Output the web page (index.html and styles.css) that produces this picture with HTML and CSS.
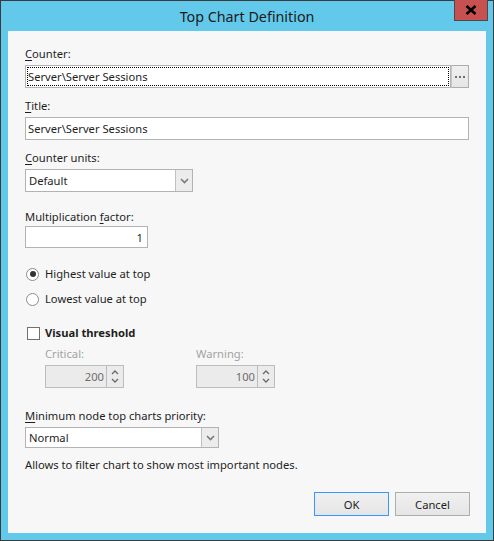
FILE: index.html
```html
<!DOCTYPE html>
<html>
<head>
<meta charset="utf-8">
<link rel="stylesheet" href="styles.css">
</head>
<body>
<div class="window">
  <div class="titlebar">
    <span class="title">Top Chart Definition</span>
    <div class="close"><svg width="12" height="10" viewBox="0 0 12 10"><path d="M1.5 1 L10.5 9 M10.5 1 L1.5 9" stroke="#000" stroke-width="2.6"/></svg></div>
  </div>
  <div class="client">
    <div class="label l-counter"><u>C</u>ounter:</div>
    <div class="row">
      <div class="textbox counter-box"><span>Server\Server Sessions</span></div>
      <div class="ellipsis"><i></i><i></i><i></i></div>
    </div>

    <div class="label l-gap10"><u>T</u>itle:</div>
    <div class="textbox full"><span>Server\Server Sessions</span></div>

    <div class="label l-gap10"><u>C</u>ounter units:</div>
    <div class="combo units">
      <span class="combo-text">Default</span>
      <span class="combo-btn"><svg width="9" height="6" viewBox="0 0 9 6"><path d="M1 1 L4.5 4.5 L8 1" fill="none" stroke="#7a7a7a" stroke-width="1.6"/></svg></span>
    </div>

    <div class="label l-mult">Multiplication <u>f</u>actor:</div>
    <div class="textbox mult"><span class="num">1</span></div>

    <div class="radio r1"><span class="rbox checked"></span><span>Highest value at top</span></div>
    <div class="radio r2"><span class="rbox"></span><span>Lowest value at top</span></div>

    <div class="check"><span class="cbox"></span><span class="bold">Visual threshold</span></div>

    <div class="thresholds">
      <div class="tcol">
        <div class="label dis">Critical:</div>
        <div class="spin">
          <span class="spin-val">200</span>
          <span class="spin-btns">
            <svg width="8" height="5" viewBox="0 0 8 5"><path d="M1 4 L4 1 L7 4" fill="none" stroke="#6a6a6a" stroke-width="1.3"/></svg>
            <svg width="8" height="5" viewBox="0 0 8 5"><path d="M1 1 L4 4 L7 1" fill="none" stroke="#6a6a6a" stroke-width="1.3"/></svg>
          </span>
        </div>
      </div>
      <div class="tcol">
        <div class="label dis">Warning:</div>
        <div class="spin">
          <span class="spin-val">100</span>
          <span class="spin-btns">
            <svg width="8" height="5" viewBox="0 0 8 5"><path d="M1 4 L4 1 L7 4" fill="none" stroke="#6a6a6a" stroke-width="1.3"/></svg>
            <svg width="8" height="5" viewBox="0 0 8 5"><path d="M1 1 L4 4 L7 1" fill="none" stroke="#6a6a6a" stroke-width="1.3"/></svg>
          </span>
        </div>
      </div>
    </div>

    <div class="label l-min"><u>M</u>inimum node top charts priority:</div>
    <div class="combo prio">
      <span class="combo-text">Normal</span>
      <span class="combo-btn"><svg width="9" height="6" viewBox="0 0 9 6"><path d="M1 1 L4.5 4.5 L8 1" fill="none" stroke="#7a7a7a" stroke-width="1.6"/></svg></span>
    </div>

    <div class="hint">Allows to filter chart to show most important nodes.</div>

    <div class="buttons">
      <div class="btn ok">OK</div>
      <div class="btn">Cancel</div>
    </div>
  </div>
</div>
</body>
</html>
```
FILE: styles.css
```css
html, body {
  margin: 0;
  padding: 0;
  background: #63c9ea;
}
body {
  font-family: "Noto Sans", "Open Sans", sans-serif;
  font-size: 11.2px;
  color: #1e1e1e;
}
.window {
  position: relative;
  width: 494px;
  height: 541px;
  box-sizing: border-box;
  border: 1px solid #3b3b3b;
  background: #63c9ea;
}
.titlebar {
  height: 30px;
  display: flex;
  align-items: center;
  justify-content: center;
}
.title {
  font-size: 14.3px;
  color: #1a1a1a;
  margin-top: 1px;
}
.close {
  position: absolute;
  top: -1px;
  right: 5px;
  width: 34px;
  height: 21px;
  box-sizing: border-box;
  background: #c75050;
  border: 1px solid #4a4a4a;
  border-top: none;
  display: flex;
  align-items: center;
  justify-content: center;
}
.client {
  margin: 0 7px;
  height: 502px;
  box-sizing: border-box;
  background: #f7f7f7;
  padding: 0 17px;
  display: flex;
  flex-direction: column;
  align-items: flex-start;
}
.label {
  line-height: 16px;
  height: 16px;
  margin-bottom: 3px;
  white-space: nowrap;
}
.l-counter { margin-top: 15px; }
.l-gap10 { margin-top: 10px; }
.l-mult { margin-top: 17px; margin-bottom: 1px; }
.l-min { margin-top: 20px; }
.dis { color: #a3a3a3; }
u { text-decoration: underline; text-underline-offset: 2px; }
.row {
  display: flex;
  width: 444px;
}
.textbox {
  height: 23px;
  box-sizing: border-box;
  border: 1px solid #b3b3b3;
  background: #fff;
  display: flex;
  align-items: center;
  padding: 0 2px;
  white-space: nowrap;
}
.counter-box {
  width: 426px;
  outline: 1px dotted #000;
  outline-offset: -3px;
}
.full { width: 444px; }
.mult {
  width: 123px;
  height: 22px;
  justify-content: flex-end;
  padding-right: 4px;
}
.ellipsis {
  width: 18px;
  height: 23px;
  box-sizing: border-box;
  border: 1px solid #adadad;
  border-left: 1px solid #c8c8c8;
  background: linear-gradient(#f0f0f0, #e5e5e5);
  display: flex;
  align-items: center;
  justify-content: center;
  gap: 2px;
}
.ellipsis i {
  width: 2px;
  height: 2px;
  background: #707070;
}
.combo {
  height: 23px;
  box-sizing: border-box;
  border: 1px solid #b3b3b3;
  background: #fff;
  display: flex;
  align-items: stretch;
}
.units { width: 168px; }
.prio { width: 194px; height: 21px; }
.combo-text {
  flex: 1;
  display: flex;
  align-items: center;
  padding-left: 3px;
}
.combo-btn {
  width: 16px;
  border-left: 1px solid #c0c0c0;
  background: #ececec;
  display: flex;
  align-items: center;
  justify-content: center;
}
.radio, .check {
  display: flex;
  align-items: center;
  height: 16px;
  line-height: 16px;
}
.r1 { margin-top: 18px; }
.r2 { margin-top: 9px; }
.rbox {
  width: 13px;
  height: 13px;
  box-sizing: border-box;
  border: 1px solid #8c8c8c;
  border-radius: 50%;
  background: #fff;
  margin-left: 1px;
  margin-right: 6px;
  display: flex;
  align-items: center;
  justify-content: center;
}
.rbox.checked::after {
  content: "";
  width: 6px;
  height: 6px;
  border-radius: 50%;
  background: #333;
}
.check { margin-top: 18px; }
.cbox {
  width: 13px;
  height: 13px;
  box-sizing: border-box;
  border: 1px solid #707070;
  background: #fff;
  margin-left: 2px;
  margin-right: 5px;
}
.bold { font-weight: bold; }
.thresholds {
  display: flex;
  margin-top: 5px;
  margin-left: 20px;
  gap: 72px;
}
.spin {
  width: 79px;
  height: 23px;
  box-sizing: border-box;
  border: 1px solid #bcbcbc;
  background: #ebebeb;
  display: flex;
}
.spin-val {
  flex: 1;
  display: flex;
  align-items: center;
  justify-content: flex-end;
  padding-right: 2px;
  color: #6d6d6d;
}
.spin-btns {
  width: 16px;
  border-left: 1px solid #bcbcbc;
  display: flex;
  flex-direction: column;
  align-items: center;
  justify-content: center;
  gap: 3px;
}
.hint {
  margin-top: 9px;
  line-height: 16px;
  white-space: nowrap;
}
.buttons {
  align-self: stretch;
  display: flex;
  justify-content: flex-end;
  gap: 6px;
  margin-top: 19px;
  margin-right: -1px;
}
.btn {
  width: 75px;
  height: 24px;
  box-sizing: border-box;
  border: 1px solid #adadad;
  background: linear-gradient(#f0f0f0, #e5e5e5);
  display: flex;
  align-items: center;
  justify-content: center;
}
.btn.ok { border-color: #3399ff; }
```
